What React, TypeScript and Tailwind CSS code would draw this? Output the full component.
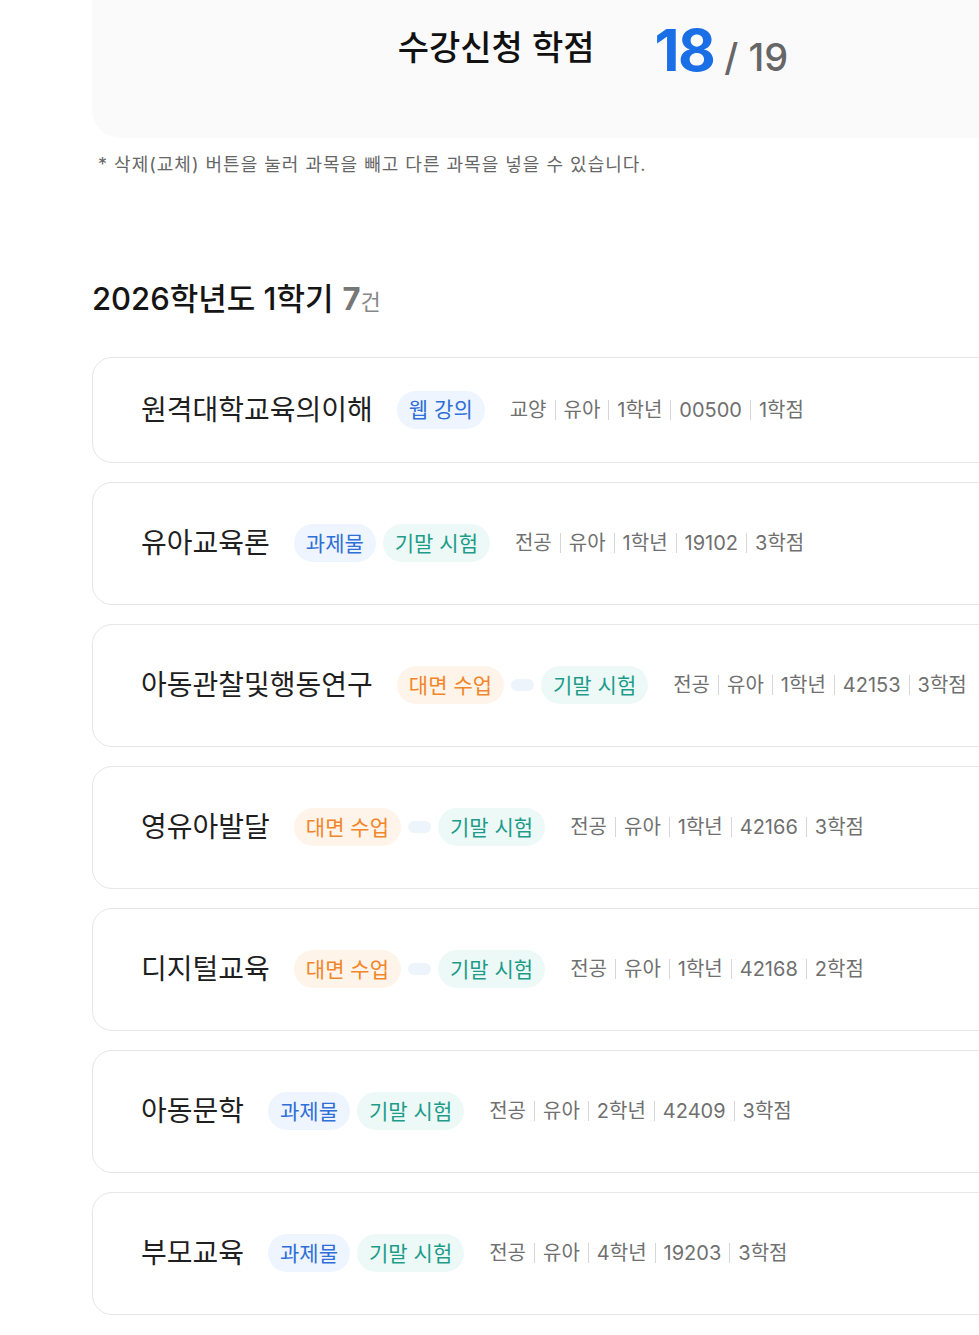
import React from 'react';

type Badge = { label: string; tone: 'blue' | 'teal' | 'orange' | 'dot' };

type Course = {
  title: string;
  badges: Badge[];
  meta: string[];
  compact?: boolean;
};

const courses: Course[] = [
  {
    title: '원격대학교육의이해',
    badges: [{ label: '웹 강의', tone: 'blue' }],
    meta: ['교양', '유아', '1학년', '00500', '1학점'],
    compact: true,
  },
  {
    title: '유아교육론',
    badges: [
      { label: '과제물', tone: 'blue' },
      { label: '기말 시험', tone: 'teal' },
    ],
    meta: ['전공', '유아', '1학년', '19102', '3학점'],
  },
  {
    title: '아동관찰및행동연구',
    badges: [
      { label: '대면 수업', tone: 'orange' },
      { label: '', tone: 'dot' },
      { label: '기말 시험', tone: 'teal' },
    ],
    meta: ['전공', '유아', '1학년', '42153', '3학점'],
  },
  {
    title: '영유아발달',
    badges: [
      { label: '대면 수업', tone: 'orange' },
      { label: '', tone: 'dot' },
      { label: '기말 시험', tone: 'teal' },
    ],
    meta: ['전공', '유아', '1학년', '42166', '3학점'],
  },
  {
    title: '디지털교육',
    badges: [
      { label: '대면 수업', tone: 'orange' },
      { label: '', tone: 'dot' },
      { label: '기말 시험', tone: 'teal' },
    ],
    meta: ['전공', '유아', '1학년', '42168', '2학점'],
  },
  {
    title: '아동문학',
    badges: [
      { label: '과제물', tone: 'blue' },
      { label: '기말 시험', tone: 'teal' },
    ],
    meta: ['전공', '유아', '2학년', '42409', '3학점'],
  },
  {
    title: '부모교육',
    badges: [
      { label: '과제물', tone: 'blue' },
      { label: '기말 시험', tone: 'teal' },
    ],
    meta: ['전공', '유아', '4학년', '19203', '3학점'],
  },
];

const toneClass = {
  blue: 'bg-[#eef5fe] text-[#2e6fd8]',
  teal: 'bg-[#edf9f6] text-[#1d9c8b]',
  orange: 'bg-[#fff4ea] text-[#f2862a]',
  dot: '',
};

function CourseBadge({ badge }: { badge: Badge }) {
  if (badge.tone === 'dot') {
    return <span className="h-[12px] w-[23px] rounded-full bg-[#eef4fc]" />;
  }
  return (
    <span
      className={`flex h-[38px] items-center rounded-full px-[12px] text-[21px] leading-none ${toneClass[badge.tone]}`}
    >
      {badge.label}
    </span>
  );
}

function CourseCard({ course }: { course: Course }) {
  return (
    <div
      className={`flex items-center rounded-[20px] border border-[#e6e6e6] pl-[48px] ${
        course.compact ? 'h-[106px]' : 'h-[123px]'
      }`}
    >
      <h3 className="text-[28px] leading-none text-[#1f1f1f]">{course.title}</h3>
      <div className="ml-[24px] flex items-center gap-[7px]">
        {course.badges.map((b, i) => (
          <CourseBadge key={i} badge={b} />
        ))}
      </div>
      <div className="ml-[25px] flex items-center text-[20px] leading-none text-[#707070]">
        {course.meta.map((m, i) => (
          <React.Fragment key={i}>
            {i > 0 && <span className="mx-[8px] h-[20px] w-px bg-[#d6d6d6]" />}
            <span>{m}</span>
          </React.Fragment>
        ))}
      </div>
    </div>
  );
}

export default function App() {
  return (
    <div
      className="min-h-[1335px] w-full overflow-hidden bg-white"
      style={{ fontFamily: 'Inter, "Noto Sans CJK KR", sans-serif' }}
    >
      <div className="ml-[92px] w-[1002px]">
        <section className="flex h-[138px] items-start justify-center rounded-b-[28px] bg-[#fafafa] pt-[16px]">
          <div className="flex items-center">
            <h2 className="text-[34px] font-medium leading-none text-[#111]">수강신청 학점</h2>
            <div className="ml-[60px] mt-[5px] flex items-baseline">
              <span className="text-[58px] font-bold leading-none tracking-tight text-[#1a6fe6]">18</span>
              <span className="ml-[10px] text-[38px] font-medium leading-none text-[#666]">/ 19</span>
            </div>
          </div>
        </section>
        <p className="mt-[13px] pl-[6px] text-[18px] tracking-[1px] text-[#666]">
          * 삭제(교체) 버튼을 눌러 과목을 빼고 다른 과목을 넣을 수 있습니다.
        </p>

        <h2 className="mt-[98px] flex items-baseline text-[31px] font-medium text-[#151515]">
          2026학년도 1학기
          <span className="ml-[9px] text-[31px] font-bold text-[#777]">7</span>
          <span className="text-[22px] font-normal text-[#888]">건</span>
        </h2>

        <div className="mt-[34px] flex flex-col gap-[19px]">
          {courses.map((c) => (
            <CourseCard key={c.title} course={c} />
          ))}
        </div>
      </div>
    </div>
  );
}
